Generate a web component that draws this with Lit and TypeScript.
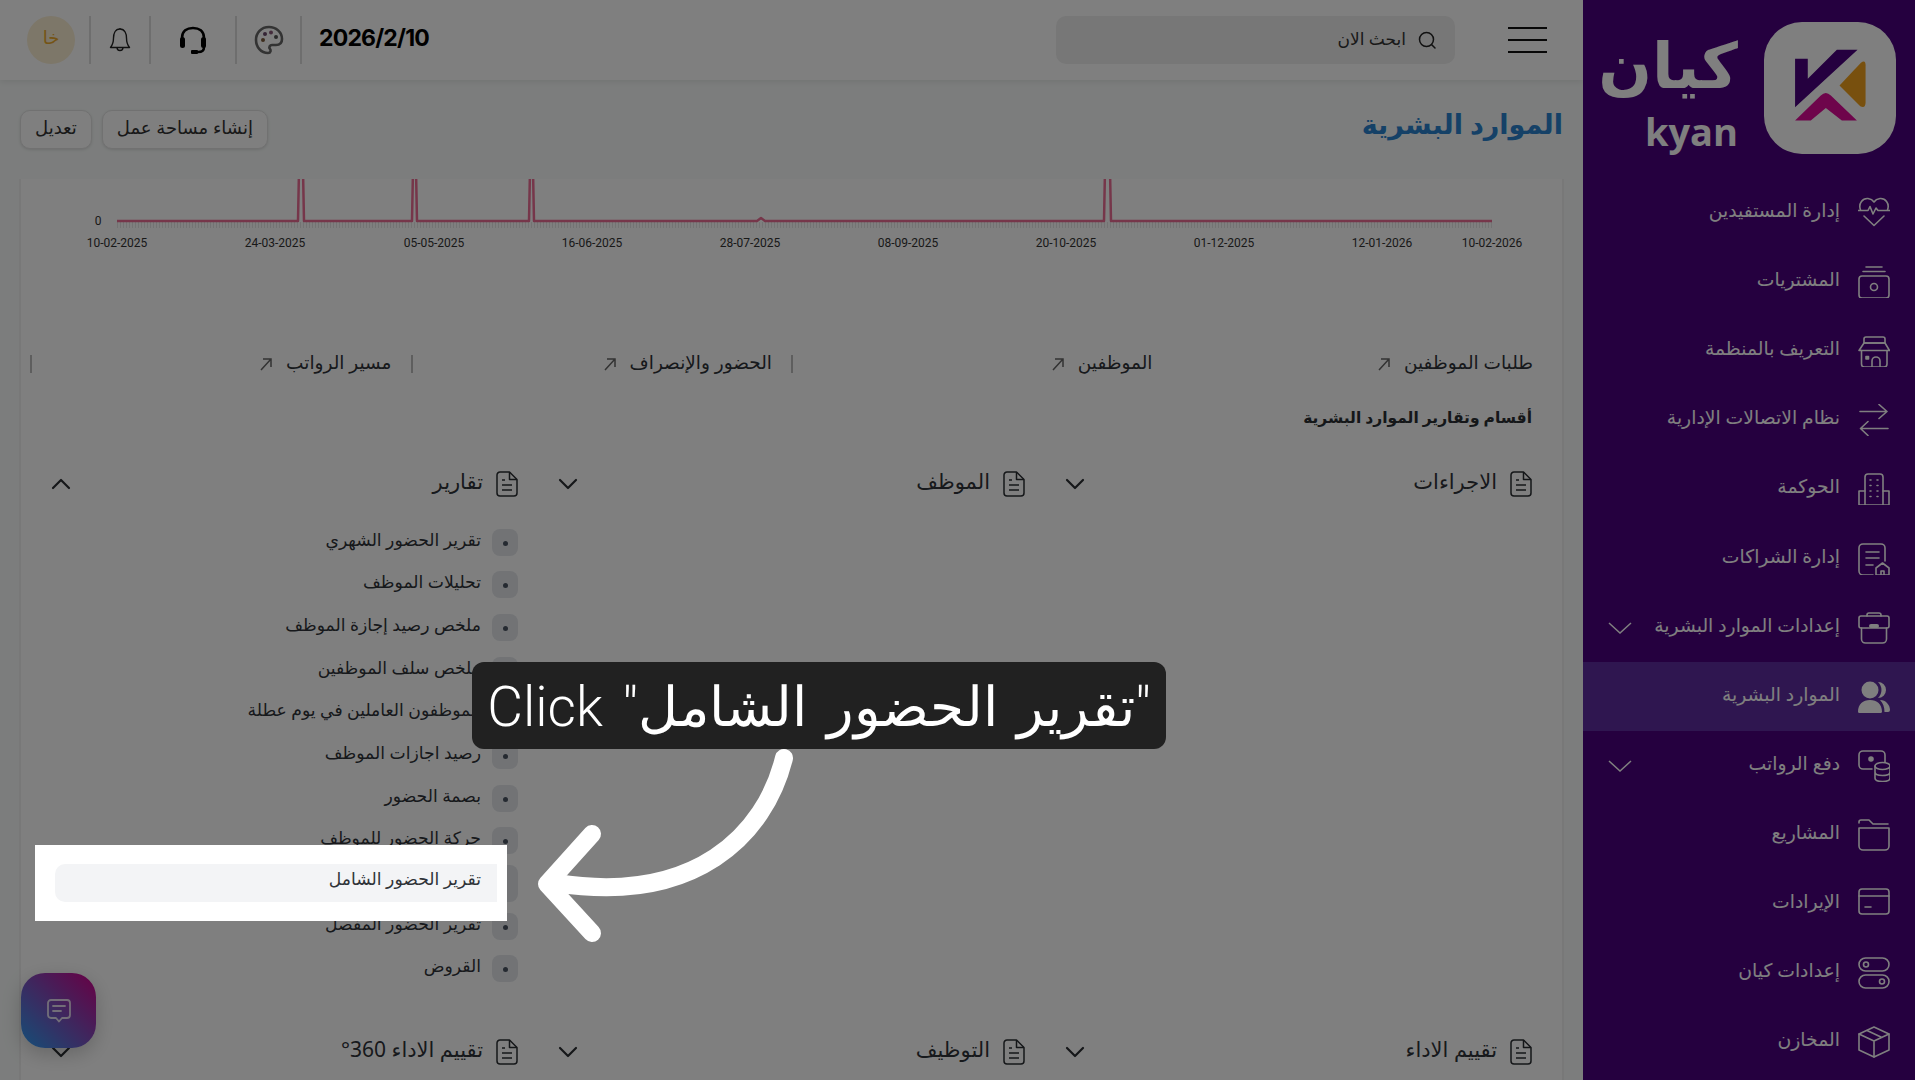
import { LitElement, html, css, svg } from "lit";
import { customElement } from "lit/decorators.js";

const navItems: [string, any, boolean?, boolean?][] = [
  ["إدارة المستفيدين", svg`<path d="M2.5 13C0 6 5 1 10 1.500C13 2 15 3.500 16 5C17 3.500 19 2 22 1.500C27 1 32 6 29.500 13"/><path d="M0 13.500H10L12 9.500L15 17L18 11L20 13.500H32"/><path d="M6 19L16 28.500L26 19"/>`],
  ["المشتريات", svg`<path d="M8 1H24M5 5.500H27"/><rect x="1" y="10" width="30" height="22" rx="3"/><circle cx="16" cy="21" r="3.500"/>`],
  ["التعريف بالمنظمة", svg`<path d="M6 8V4a2 2 0 0 1 2-2H25a2 2 0 0 1 2 2V8Z"/><path d="M6 8H27L31.500 15.500H1Z"/><path d="M3.500 15.500V29a3 3 0 0 0 3 3H26a3 3 0 0 0 3-3V15.500"/><path d="M14 32V26a4 4 0 0 1 8 0V32"/><rect x="8" y="21.500" width="2.500" height="2.500" fill="currentColor"/>`],
  ["نظام الاتصالات الإدارية", svg`<path d="M2 7.500H29M21 0.500L29 7.500L21 14.500"/><path d="M30 24.500H2.500M10 17.500L2.500 24.500L10 31.500"/>`],
  ["الحوكمة", svg`<path d="M7 32V4a3 3 0 0 1 3-3H22a3 3 0 0 1 3 3V32"/><path d="M7 18H1V32H31V18H25"/><path d="M12 7h1M19 7h1M12 12.500h1M19 12.500h1M12 18h1M19 18h1M12 23.500h1M19 23.500h1"/>`],
  ["إدارة الشراكات", svg`<path d="M15 32H5a4 4 0 0 1-4-4V5a4 4 0 0 1 4-4H23a4 4 0 0 1 4 4V18"/><path d="M8 9H21M8 15H21M8 22H15"/><path d="M18 32V25L24.500 20L31 25V32ZM23 32V28H26V32"/>`],
  ["إعدادات الموارد البشرية", svg`<path d="M9 4V3a2 2 0 0 1 2-2H21a2 2 0 0 1 2 2V4"/><path d="M3 4H29a2 2 0 0 1 2 2V14a2 2 0 0 1-2 2H3a2 2 0 0 1-2-2V6a2 2 0 0 1 2-2Z"/><path d="M3.500 16V27a4 4 0 0 0 4 4H24.500a4 4 0 0 0 4-4V16"/><path d="M13 14H19" stroke-width="4" stroke-linecap="round"/>`, true],
  ["الموارد البشرية", svg`<g fill="currentColor" stroke="none"><circle cx="12" cy="9" r="8.500"/><path d="M0 31C0 23 5 19 12 19S24 23 24 31a1.500 1.500 0 0 1-1.500 1H1.500A1.500 1.500 0 0 1 0 31Z"/><path d="M20 1A8 8 0 0 1 20 17A11 11 0 0 0 20 1Z"/><path d="M22 19C28 19 32 24 32 29a2 2 0 0 1-2 2H26.500C26.500 26 25 22 22 19Z"/></g>`, false, true],
  ["دفع الرواتب", svg`<path d="M14 19H5a4 4 0 0 1-4-4V5a4 4 0 0 1 4-4H23a4 4 0 0 1 4 4V12"/><circle cx="13" cy="9" r="2" fill="currentColor"/><ellipse cx="24.500" cy="16" rx="7.500" ry="3.500"/><path d="M17 16V28C17 30 20 31.500 24.500 31.500S32 30 32 28V16M17 22C17 24 20 25.500 24.500 25.500S32 24 32 22"/>`, true],
  ["المشاريع", svg`<path d="M1 4V3a2 2 0 0 1 2-2H11L15 5H30"/><path d="M1 9H31V27a4 4 0 0 1-4 4H5a4 4 0 0 1-4-4Z"/>`],
  ["الإيرادات", svg`<rect x="1" y="1" width="30" height="25" rx="3"/><path d="M1 8H31M7 19H13"/>`],
  ["إعدادات كيان", svg`<rect x="1" y="1" width="30" height="13" rx="6.500"/><circle cx="8" cy="7.500" r="2.500"/><rect x="1" y="18" width="30" height="13" rx="6.500"/><circle cx="24" cy="24.500" r="2.500"/>`],
  ["المخازن", svg`<path d="M16 1L31 8V24L16 31L1 24V8Z"/><path d="M1 8L16 15L31 8M16 15V31M9 4.500L24 11.500"/>`],
];

const links = ["طلبات الموظفين", "الموظفين", "الحضور والإنصراف", "مسير الرواتب"];

const reports = [
  "تقرير الحضور الشهري",
  "تحليلات الموظف",
  "ملخص رصيد إجازة الموظف",
  "ملخص سلف الموظفين",
  "الموظفون العاملين في يوم عطلة",
  "رصيد اجازات الموظف",
  "بصمة الحضور",
  "حركة الحضور للموظف",
  "",
  "تقرير الحضور المفصل",
  "القروض",
];

const axis: [number, string][] = [
  [117, "10-02-2025"], [275, "24-03-2025"], [434, "05-05-2025"], [592, "16-06-2025"], [750, "28-07-2025"],
  [908, "08-09-2025"], [1066, "20-10-2025"], [1224, "01-12-2025"], [1382, "12-01-2026"], [1492, "10-02-2026"],
];

const fileIcon = html`<svg class="file" viewBox="0 0 22 26"><path d="M13.500 1H4a3 3 0 0 0-3 3V22a3 3 0 0 0 3 3H18a3 3 0 0 0 3-3V8.500Z"/><path d="M13.500 1V8.500H21M6 9H9M6 14H16M6 19H16"/></svg>`;
const chevron = (up = false) => html`<svg class="chev ${up ? "up" : ""}" viewBox="0 0 20 12"><path d="M2 2L10 10L18 2"/></svg>`;

@customElement("app-root")
export class AppRoot extends LitElement {
  static styles = css`
    :host { display: block; width: 1915px; height: 1080px; position: relative; overflow: hidden; font-family: "Noto Sans", "DejaVu Sans", sans-serif; background: #f8fbfa; color: #2f3338; }
    * { box-sizing: border-box; }
    .shell { display: flex; direction: rtl; width: 1915px; height: 1080px; }
    .side { width: 332px; height: 1080px; flex: none; background: #4a007e; color: #fff; overflow: hidden; }
    .brand { display: flex; height: 178.500px; padding: 22px 19px 0 0; gap: 26px; }
    .logo { width: 132px; height: 132px; background: #fff; border-radius: 38px; flex: none; }
    .logo svg { width: 132px; height: 132px; display: block; }
    .word { display: flex; flex-direction: column; width: 140px; color: #fff; }
    .word .ar { font-size: 63px; font-weight: 700; line-height: 84px; height: 90px; }
    .word .en { direction: ltr; font-family: "Open Sans", sans-serif; font-size: 38px; font-weight: 700; line-height: 38px; align-self: flex-start; }
    .row { display: flex; align-items: center; height: 69.100px; padding: 0 25px 0 0; gap: 18px; font-size: 18.800px; }
    .row.active { background: #5e2ca0; }
    .row .ic { width: 32px; height: 32px; flex: none; fill: none; stroke: currentColor; stroke-width: 1.600; stroke-linecap: round; stroke-linejoin: round; }
    .row .lab { flex: 1; margin-top: -6px; white-space: nowrap; }
    .row .more { width: 24px; height: 12px; margin-left: 25px; flex: none; fill: none; stroke: currentColor; stroke-width: 1.500; }

    .main { flex: 1; min-width: 0; height: 1080px; overflow: hidden; display: flex; flex-direction: column; }
    .top { height: 80px; flex: none; background: #fff; box-shadow: 0 2px 6px rgba(0, 0, 0, .08); display: flex; align-items: center; justify-content: space-between; padding: 0 36px 0 27px; position: relative; }
    .burger { display: flex; flex-direction: column; gap: 10px; width: 39px; flex: none; }
    .burger i { display: block; height: 2px; background: #111; }
    .search { width: 399px; height: 48px; margin-right: 53px; background: #eeeeee; border-radius: 10px; display: flex; align-items: center; padding-right: 18px; gap: 11px; font-size: 17px; color: #333; }
    .search svg { width: 20px; height: 20px; fill: none; stroke: #222; stroke-width: 1.500; stroke-linecap: round; }
    .search span { margin-top: -4px; }
    .left { margin-right: auto; display: flex; direction: ltr; align-items: center; height: 48px; }
    .cell { height: 48px; display: flex; align-items: center; justify-content: center; border-right: 2px solid #dcdcdc; }
    .c1 { width: 64px; justify-content: flex-start; }
    .c2 { width: 60px; }
    .c3 { width: 86px; }
    .c4 { width: 65px; }
    .av { width: 48px; height: 48px; border-radius: 50%; background: #faeed3; color: #eaa82a; font-size: 18px; display: flex; align-items: center; justify-content: center; padding-bottom: 6px; }
    .bell { width: 22px; height: 26px; fill: none; stroke: #222; stroke-width: 1.400; stroke-linejoin: round; }
    .head { width: 30px; height: 30px; fill: none; stroke: #000; stroke-width: 2.600; stroke-linecap: round; }
    .head .f { fill: #000; stroke: none; }
    .pal { width: 30px; height: 30px; fill: none; stroke: #666; stroke-width: 2.600; }
    .date { font-family: "Inter", sans-serif; font-size: 23px; font-weight: 700; color: #000; padding-left: 17px; margin-top: -5px; letter-spacing: -.8px; }

    .title-row { height: 99px; flex: none; padding: 30px 23px 0 20px; display: flex; justify-content: space-between; align-items: flex-start; }
    h1 { margin: -4px -3px 0 0; font-size: 27px; line-height: 36px; font-weight: 700; color: #2a82cf; }
    .btns { display: flex; gap: 10px; direction: rtl; }
    .btn { height: 39px; display: flex; align-items: center; padding: 0 14px 6px; border: 1px solid #e3e3e3; border-radius: 10px; background: #fff; box-shadow: 0 1px 3px rgba(0, 0, 0, .12); font-size: 18px; white-space: nowrap; color: #333; }

    .card { margin: 0 19px; flex: 1; background: #fff; border: solid #f0f0f0; border-width: 0 2px; }
    .chart { display: block; width: 1541px; height: 161px; }
    .chart .ln { fill: none; stroke: #ec6d94; stroke-width: 2.500; stroke-linejoin: round; }
    .chart .tk { stroke: #e6e6e6; stroke-width: 6; stroke-dasharray: 1 2; fill: none; }
    .chart text { font-family: "Roboto", sans-serif; font-size: 12px; fill: #333; text-anchor: middle; }
    .links { display: grid; grid-template-columns: repeat(4, 380.500px); margin: 0 10px 0 10px; height: 48px; }
    .lk { display: flex; align-items: center; gap: 13px; padding-right: 19px; height: 18px; margin-top: 15px; font-size: 18.500px; white-space: nowrap; border-left: 2px solid #bdbdbd; }
    .lk:first-child { border-left: 0; }
    .lk span { margin-top: -5px; }
    .lk svg { width: 14px; height: 14px; fill: none; stroke: #666; stroke-width: 1.500; }
    h2 { margin: 0; height: 80px; padding: 17px 30px 0 0; font-size: 15.500px; line-height: 24px; font-weight: 700; color: #2b2f33; }
    .grid { display: grid; grid-template-columns: repeat(3, 467px); column-gap: 40px; padding: 0 30px; }
    .head-row { display: flex; align-items: center; height: 32px; gap: 13px; font-size: 21px; white-space: nowrap; }
    .head-row span { flex: 1; margin-top: -7px; }
    .file { width: 22px; height: 26px; flex: none; fill: none; stroke: #2b2f33; stroke-width: 1.500; stroke-linejoin: round; }
    .chev { width: 20px; height: 12px; flex: none; fill: none; stroke: #2b2f33; stroke-width: 2.200; stroke-linecap: round; stroke-linejoin: round; }
    .chev.up { transform: rotate(180deg); }
    .body { height: 536px; padding-top: 21px; }
    .li { display: flex; align-items: center; height: 42.670px; gap: 11px; font-size: 17.200px; color: #2f3338; white-space: nowrap; }
    .box { width: 26px; height: 27px; border-radius: 8px; background: #e5e7eb; flex: none; display: flex; align-items: center; justify-content: center; }
    .box.hot { width: 31px; height: 37px; margin-left: -5px; }
    .box i { width: 5px; height: 5px; border-radius: 50%; background: #4b5563; margin-top: 2px; }
    .li span { margin-top: -6px; }
    .float { position: absolute; left: 21px; top: 973px; width: 75px; height: 75px; border-radius: 24px; background: linear-gradient(to top right, #2a9df0, #d0008a); box-shadow: 0 6px 20px rgba(0, 0, 0, .2); display: flex; align-items: center; justify-content: center; }
    .float svg { width: 26px; height: 26px; fill: none; stroke: #fff; stroke-width: 1.800; stroke-linejoin: round; stroke-linecap: round; opacity: .8; }

    .dim { position: absolute; inset: 0; background: rgba(0, 0, 0, .5); }
    .spot { position: absolute; left: 35px; top: 845px; width: 472px; height: 76px; background: #fff; direction: rtl; padding: 19px 10px 0 0; }
    .spot div { height: 38px; width: 442px; background: #f3f4f6; border-radius: 10px 0 0 10px; padding: 0 16px 0 0; font-size: 17.200px; line-height: 30px; color: #2f3338; white-space: nowrap; }
    .tip { position: absolute; left: 472px; top: 662px; width: 694px; height: 87px; border-radius: 12px; background: #212121; color: #fff; direction: ltr; font-family: "Roboto", "DejaVu Sans", sans-serif; font-weight: 300; font-size: 55px; word-spacing: 6px; line-height: 90px; text-align: center; white-space: nowrap; }
    .arrow { position: absolute; left: 0; top: 0; width: 1915px; height: 1080px; fill: none; stroke: #fff; stroke-width: 18; stroke-linecap: round; stroke-linejoin: round; pointer-events: none; }
  `;

  render() {
    return html`
      <div class="shell">
        <aside class="side">
          <div class="brand">
            <div class="logo">
              <svg viewBox="552 65 395 395">
                <path d="M645 175H683V235L770 148H832L645 320Z" fill="#4a007e"/>
                <path d="M778 255L842 187Q856 176 856 195V305Q856 325 840 317Z" fill="#f0a01c"/>
                <path d="M645 360L722 285Q737 270 752 285L830 360H785L737 322L692 360Z" fill="#dc0a96"/>
              </svg>
            </div>
            <div class="word"><div class="ar">كيان</div><div class="en">kyan</div></div>
          </div>
          ${navItems.map(([t, ic, more, active]) => html`
            <div class="row ${active ? "active" : ""}">
              <svg class="ic" viewBox="0 0 32 32">${ic}</svg>
              <span class="lab">${t}</span>
              ${more ? html`<svg class="more" viewBox="0 0 24 12"><path d="M1 1L12 11L23 1"/></svg>` : ""}
            </div>`)}
        </aside>
        <main class="main">
          <header class="top">
            <div class="burger"><i></i><i></i><i></i></div>
            <div class="search">
              <svg viewBox="0 0 20 20"><circle cx="9.500" cy="9.500" r="7"/><path d="M14.500 14.500L18 18"/></svg>
              <span>ابحث الان</span>
            </div>
            <div class="left">
              <div class="cell c1"><div class="av">خا</div></div>
              <div class="cell c2"><svg class="bell" viewBox="0 0 22 26"><path d="M11 2C6 2 4.500 7 4.500 11C4.500 15 3.500 18 1.500 20.500H20.500C18.500 18 17.500 15 17.500 11C17.500 7 16 2 11 2ZM8 20.500C8 24.500 14 24.500 14 20.500M11 2V1"/></svg></div>
              <div class="cell c3"><svg class="head" viewBox="0 0 30 30"><path d="M4 16V13C4 6 9 3 15 3S26 6 26 13V16"/><rect class="f" x="2" y="12" width="5" height="11" rx="2.500"/><rect class="f" x="23" y="12" width="5" height="11" rx="2.500"/><path d="M26 22C26 26 24 27 20 27"/><rect class="f" x="13" y="25" width="7" height="4" rx="1"/></svg></div>
              <div class="cell c4"><svg class="pal" viewBox="0 0 30 30"><path d="M15 2C7 2 2 8 2 15C2 22 7 28 14 28C17 28 17 25 16 24C14.500 22 16 20 18 20H22C26 20 28 18 28 14C28 7 22 2 15 2Z"/><g stroke="none"><circle cx="9" cy="15" r="2" fill="#7a5a3a"/><circle cx="11" cy="9" r="2" fill="#6a4a6a"/><circle cx="17" cy="7.500" r="2" fill="#8a5a7a"/><circle cx="22" cy="12" r="2" fill="#555"/></g></svg></div>
              <div class="date">2026/2/10</div>
            </div>
          </header>
          <div class="title-row">
            <h1>الموارد البشرية</h1>
            <div class="btns"><div class="btn">إنشاء مساحة عمل</div><div class="btn">تعديل</div></div>
          </div>
          <section class="card">
            <svg class="chart" viewBox="21 179 1541 161">
              <path class="tk" d="M117 225H1492"/>
              <path class="ln" d="M117 221H298L299 170H303L304 221H412L413 170H416L417 221H529L530 170H533L534 221H757L761 218L765 221H1104L1105 170H1110L1111 221H1492"/>
              <text x="98" y="225">0</text>
              ${axis.map(([x, t]) => svg`<text x=${x} y="247">${t}</text>`)}
            </svg>
            <div class="links">
              ${links.map((t) => html`<div class="lk"><span>${t}</span><svg viewBox="0 0 14 14"><path d="M2 13L12 2M4 2H12V10"/></svg></div>`)}
            </div>
            <h2>أقسام وتقارير الموارد البشرية</h2>
            <div class="grid">
              <div class="col">
                <div class="head-row">${fileIcon}<span>الاجراءات</span>${chevron()}</div>
                <div class="body"></div>
                <div class="head-row">${fileIcon}<span>تقييم الاداء</span>${chevron()}</div>
              </div>
              <div class="col">
                <div class="head-row">${fileIcon}<span>الموظف</span>${chevron()}</div>
                <div class="body"></div>
                <div class="head-row">${fileIcon}<span>التوظيف</span>${chevron()}</div>
              </div>
              <div class="col">
                <div class="head-row">${fileIcon}<span>تقارير</span>${chevron(true)}</div>
                <div class="body">
                  ${reports.map((t) => html`<div class="li"><div class="box ${t ? "" : "hot"}"><i></i></div><span>${t}</span></div>`)}
                </div>
                <div class="head-row">${fileIcon}<span>تقييم الاداء 360°</span>${chevron()}</div>
              </div>
            </div>
          </section>
        </main>
      </div>
      <div class="float"><svg viewBox="0 0 26 26"><path d="M5 2H21a3 3 0 0 1 3 3V17a3 3 0 0 1-3 3H16L13 23.500L10 20H5a3 3 0 0 1-3-3V5a3 3 0 0 1 3-3Z"/><path d="M7 8H19M7 13H15"/></svg></div>
      <div class="dim"></div>
      <div class="spot"><div>تقرير الحضور الشامل</div></div>
      <div class="tip">Click "تقرير الحضور الشامل"</div>
      <svg class="arrow" viewBox="0 0 1915 1080"><path d="M784 758C765 835 695 905 556 883"/><path d="M592 834L547 884L592 933"/></svg>
    `;
  }
}
